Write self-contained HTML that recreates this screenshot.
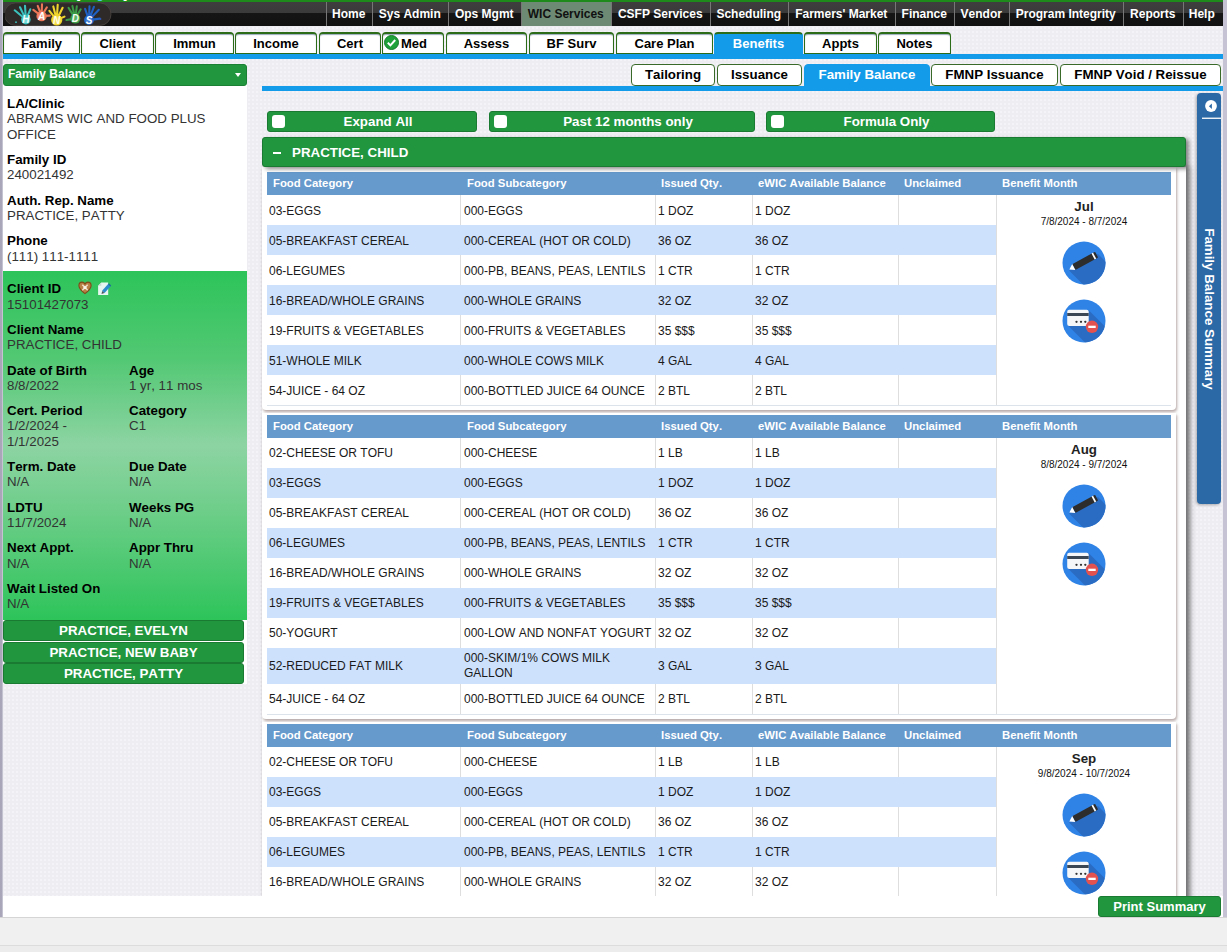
<!DOCTYPE html>
<html lang="en"><head><meta charset="utf-8"><title>HANDS - Family Balance</title>
<style>
*{box-sizing:border-box;margin:0;padding:0}
html,body{width:1227px;height:952px;overflow:hidden}
body{position:relative;font-family:"Liberation Sans",sans-serif;font-size:12px;color:#000;background:#f0f0f0;font-kerning:none}
.abs{position:absolute}
#frame{position:absolute;left:0;top:0;width:1227px;height:918px;background:linear-gradient(90deg,#a7a5b7 0,#a9a7b9 2px,#e0dfe9 3px,#c5c3d4 4px)}
#page{position:absolute;left:3px;top:0;width:1220px;height:917px;background:#fff;overflow:hidden}
#bg{position:absolute;left:0;top:26px;width:1220px;height:870px;background-color:#ededf2;background-image:radial-gradient(#f4f4f8 0.9px,transparent 1.3px);background-size:4px 4px}
#gstrip{position:absolute;left:0;top:0;width:1220px;height:2px;background:#1f8a1c}
#cut{position:absolute;left:73.5px;top:-11px;font-size:11px;font-weight:bold;line-height:13px;color:#fff;white-space:nowrap}
#cut span{color:#4fc3e8}
#topbar{position:absolute;left:0;top:2px;width:1220px;height:24px;background:linear-gradient(#3e3e3e 0,#3a3a3a 11px,#151515 11.5px,#111 100%)}
.nav{position:absolute;top:2px;height:24px;color:#fff;font-weight:bold;font-size:12px;line-height:24px;text-align:center;border-left:1px solid #777;white-space:nowrap;padding-right:1.5px}
.nav.on{background:#6d8b74;color:#111}
.tab{position:absolute;top:32px;height:22px;background:#fff;border:1px solid #2c6b18;border-top-width:2px;border-radius:4px 4px 0 0;font-weight:bold;font-size:13px;line-height:19px;text-align:center;white-space:nowrap;box-shadow:inset 0 1px 1px #9ab}
.tab.on{background:#139be9;border-color:#2c6b18 #139be9 #139be9;color:#fff;box-shadow:none}
.bline{position:absolute;height:5px;background:#139be9}
.stab{position:absolute;top:64px;height:22px;background:#fff;border:1px solid #3a6a2a;border-radius:4px;font-weight:bold;font-size:13.3px;line-height:20px;text-align:center;white-space:nowrap}
.stab.on{background:#139be9;border-color:#139be9;color:#fff;border-radius:4px 4px 0 0;height:24px}
#left{position:absolute;left:0;top:64px;width:244px;height:620px;background:#fff}
#lhead{position:absolute;left:0;top:0;width:244px;height:22px;background:#21963f;border-radius:3px;color:#fff;font-weight:bold;font-size:12px;line-height:19px;padding-left:4px;border:1px solid #1b8034}
#lhead:after{content:"";position:absolute;right:5.500px;top:8px;border:3.500px solid transparent;border-top:4.500px solid #fff}
.grp{position:absolute;left:4px;width:244px;font-size:13.33px;line-height:15.33px;color:#333;white-space:nowrap}
.g{margin-bottom:10px}.g b{color:#000;display:block}.g.h{display:inline-block;width:122px;vertical-align:top}
#client{position:absolute;left:0;top:207px;width:244px;height:349px;background:linear-gradient(#2dc45a 0%,#52c873 25%,#8dd4a3 50%,#6fce8a 68%,#2dc45a 100%)}
.cbtn{position:absolute;left:0;width:241px;height:21px;background:#21963f;border:1px solid #1a7a31;border-radius:3px;color:#fff;font-weight:bold;font-size:13.33px;line-height:19px;text-align:center}
.gbtn{position:absolute;top:111px;height:21px;background:#21963f;border:1px solid #1a7a31;border-radius:3px;color:#fff;font-weight:bold;font-size:13.33px;line-height:19px;text-align:center;padding-left:12px}
.gbtn i{position:absolute;left:4px;top:3px;width:13px;height:13px;background:#fff;border-radius:3px}
#acc{position:absolute;left:259px;top:137px;width:924px;height:30px;background:#21963f;border:1px solid #1a7a31;border-radius:3px;color:#fff;font-weight:bold;font-size:13.33px;line-height:29px;padding-left:29px;box-shadow:3px 2px 4px rgba(0,0,0,.45);z-index:3;white-space:pre}
#acc i{position:absolute;left:10px;top:13.5px;width:8px;height:2px;background:#fff}
#accbody{position:absolute;left:259px;top:167px;width:924px;height:760px;background:#fff;box-shadow:4px 0 5px rgba(70,70,70,.75)}
.card{position:absolute;left:0;width:914px;background:#fff;box-shadow:1px 2px 3px rgba(110,80,80,.5);border-radius:0 0 4px 4px}
.tbl{position:absolute;left:264px;width:904px}
.th{position:absolute;left:0;top:0;width:904px;height:23px;background:#6699cc;color:#fff;font-weight:bold;font-size:11.33px;line-height:22px}
.th span{position:absolute;top:0;padding-left:6px;white-space:nowrap}
.tr{position:absolute;left:0;width:729px;background:#fff;font-size:12px;color:#1a1a1a}
.tr.alt{background:#cde1fd}
.tr span{position:absolute;top:0;height:100%;padding-left:2px;display:flex;align-items:center;white-space:nowrap;line-height:15px;border-left:1px solid #dedede}
.t1 .tr span{padding-top:2px}
.tr.alt span{border-left-color:#cde1fd}
.c1{left:0;width:194px;border-left:none!important;padding-left:2px!important}.c2{left:193px;width:195px;padding-left:3px!important}.c3{left:388px;width:97px}.c4{left:485px;width:146px}.c5{left:631px;width:98px}
.bm{position:absolute;left:729px;top:23px;width:175px;border-left:1px solid #dedede;text-align:center;background:#fff}
.bl{position:absolute;left:0;width:904px;height:1px;background:#dde3ea}
.mo{font-weight:bold;font-size:13.33px;color:#222;margin-top:4px;line-height:15px}
.dt{font-size:10px;line-height:14px;color:#111;margin-top:.5px}
.ic{position:absolute;left:65px}
#side{position:absolute;left:1194px;top:93px;width:24px;height:411px;background:#2b69a6;border-radius:4px;box-shadow:-1px 1px 3px rgba(0,0,0,.3)}
#side .vt{position:absolute;left:12px;top:216px;width:0;height:0}
#side .vt span{position:absolute;display:block;width:200px;left:-100px;top:-8px;height:16px;line-height:16px;text-align:center;color:#fff;font-weight:bold;font-size:13.33px;transform:rotate(90deg);white-space:nowrap}
#print{position:absolute;left:1095px;top:896px;width:123px;height:21px;background:#21963f;border:1px solid #1a7a31;border-radius:3px;color:#fff;font-weight:bold;font-size:13px;line-height:19px;text-align:center;z-index:9}
#foot1{position:absolute;left:0;top:917px;width:1227px;height:1px;background:#d5d5d5}
#foot2{position:absolute;left:0;top:945px;width:1227px;height:1px;background:#dcdcdc}
#foot3{position:absolute;left:0;top:946px;width:1227px;height:6px;background:#ececec}
</style></head><body>
<div id="frame"></div>
<div id="page">
<div id="bg"></div>
<div id="gstrip"></div>
<div id="cut">[ <span>Logout</span> ]</div>
<div id="topbar"></div>

<svg class="abs" style="left:2px;top:2px" width="108" height="25" viewBox="0 0 108 25">
<rect x="-0.7" y="0.9" width="106.7" height="22.6" rx="11.3" fill="#2d2a29" stroke="#4d4643" stroke-width="0.8"/>
<g font-family="Liberation Sans, sans-serif" font-weight="bold" font-style="italic" font-size="10"><circle cx="20.9" cy="17.6" r="4.8" fill="#3cc0bd"/><path d="M18.4 15.5L9.7 8.3M19.5 14.6L15.0 5.3M20.7 14.3L20.0 3.9M22.2 14.6L25.3 7.3" stroke="#3cc0bd" stroke-width="2.100" stroke-linecap="round" fill="none"/><circle cx="20.9" cy="17.9" r="3.2" fill="#a5ece8" opacity=".55"/><text x="20.9" y="21.2" text-anchor="middle" fill="#f2ffff">H</text><circle cx="36.6" cy="14.1" r="5.2" fill="#ec7658"/><path d="M33.7 11.9L28.3 7.8M35.3 10.6L32.7 3.9M36.7 10.4L37.0 2.4M38.5 10.9L41.9 5.3M40.3 13.9L44.9 13.6" stroke="#ec7658" stroke-width="2.100" stroke-linecap="round" fill="none"/><circle cx="36.6" cy="14.4" r="3.6" fill="#f4a38c" opacity=".55"/><text x="36.6" y="17.7" text-anchor="middle" fill="#ffffff">A</text><circle cx="51.7" cy="18.0" r="5.6" fill="#efd42c"/><path d="M49.2 14.8L44.4 8.8M50.7 14.0L48.3 4.4M52.0 13.9L52.7 2.9M53.5 14.3L57.6 5.8M55.5 16.4L59.5 14.6" stroke="#efd42c" stroke-width="2.100" stroke-linecap="round" fill="none"/><circle cx="51.7" cy="18.3" r="4.0" fill="#f6e676" opacity=".55"/><text x="51.7" y="21.6" text-anchor="middle" fill="#fffde8">N</text><circle cx="70.3" cy="16.6" r="5.0" fill="#3a9a45"/><path d="M68.4 13.6L63.5 5.8M69.5 13.2L67.4 3.9M70.7 13.1L71.8 4.4M72.1 13.6L75.7 7.3M66.8 17.1L61.5 18.0" stroke="#3a9a45" stroke-width="2.100" stroke-linecap="round" fill="none"/><circle cx="70.3" cy="16.9" r="3.4" fill="#7cc784" opacity=".55"/><text x="70.3" y="20.2" text-anchor="middle" fill="#f2fff0">D</text><circle cx="84.0" cy="18.0" r="5.0" fill="#1f60c2"/><path d="M82.8 14.7L80.1 6.8M84.1 14.5L84.5 4.4M85.2 14.7L88.9 4.8M86.4 15.5L93.8 7.8M87.5 17.6L94.8 16.6" stroke="#1f60c2" stroke-width="2.100" stroke-linecap="round" fill="none"/><circle cx="84.0" cy="18.3" r="3.4" fill="#5b93e3" opacity=".55"/><text x="84.0" y="21.6" text-anchor="middle" fill="#ffffff">S</text><circle cx="11" cy="20.2" r="0.9" fill="#3cc0bd"/><circle cx="95.5" cy="17" r="0.9" fill="#2f55b5"/></g></svg>
<div class="nav" style="left:323px;width:46px">Home</div>
<div class="nav" style="left:369px;width:76px">Sys Admin</div>
<div class="nav" style="left:445px;width:73px">Ops Mgmt</div>
<div class="nav on" style="left:518px;width:90px">WIC Services</div>
<div class="nav" style="left:608px;width:99px">CSFP Services</div>
<div class="nav" style="left:707px;width:78px">Scheduling</div>
<div class="nav" style="left:785px;width:107px">Farmers' Market</div>
<div class="nav" style="left:892px;width:59px">Finance</div>
<div class="nav" style="left:951px;width:55px">Vendor</div>
<div class="nav" style="left:1006px;width:114px">Program Integrity</div>
<div class="nav" style="left:1120px;width:60px">Reports</div>
<div class="nav" style="left:1180px;width:38px">Help</div>
<div class="tab" style="left:0px;width:77px">Family</div>
<div class="tab" style="left:78px;width:73px">Client</div>
<div class="tab" style="left:152px;width:79px">Immun</div>
<div class="tab" style="left:232px;width:82px">Income</div>
<div class="tab" style="left:316px;width:62px">Cert</div>
<div class="tab" style="left:379px;width:62px"><svg style="position:absolute;left:1px;top:1px" width="15" height="15" viewBox="0 0 15 15"><circle cx="7.5" cy="7.5" r="7" fill="#1fa23a" stroke="#167a2a"/><path d="M3.8 7.8l2.6 2.6 4.8-5.4" fill="none" stroke="#fff" stroke-width="2"/></svg><span style="position:absolute;left:18px;top:0">Med</span></div>
<div class="tab" style="left:443px;width:81px">Assess</div>
<div class="tab" style="left:526px;width:85px">BF Surv</div>
<div class="tab" style="left:613px;width:97px">Care Plan</div>
<div class="tab on" style="left:711px;width:89px">Benefits</div>
<div class="tab" style="left:801px;width:73px">Appts</div>
<div class="tab" style="left:875px;width:73px">Notes</div>
<div class="bline" style="left:0;top:54px;width:1220px"></div>
<div class="bline" style="left:259px;top:86px;width:961px"></div>
<div class="stab" style="left:628px;width:84px">Tailoring</div>
<div class="stab" style="left:714px;width:85px">Issuance</div>
<div class="stab on" style="left:801px;width:126px">Family Balance</div>
<div class="stab" style="left:928px;width:127px">FMNP Issuance</div>
<div class="stab" style="left:1057px;width:161px">FMNP Void / Reissue</div>
<div id="left"><div id="lhead">Family Balance</div>
<div class="grp" style="top:32px">
<div class="g"><b>LA/Clinic</b>ABRAMS WIC AND FOOD PLUS<br>OFFICE</div>
<div class="g"><b>Family ID</b>240021492</div>
<div class="g"><b>Auth. Rep. Name</b>PRACTICE, PATTY</div>
<div class="g"><b>Phone</b>(111) 111-1111</div>
</div>
<div id="client"></div>
<div class="grp" style="top:217.2px">
<div class="g"><b>Client ID</b>15101427073</div>
<div class="g"><b>Client Name</b>PRACTICE, CHILD</div>
<div><div class="g h"><b>Date of Birth</b>8/8/2022</div><div class="g h"><b>Age</b>1 yr, 11 mos</div></div>
<div><div class="g h"><b>Cert. Period</b>1/2/2024 -<br>1/1/2025</div><div class="g h"><b>Category</b>C1<br>&nbsp;</div></div>
<div><div class="g h"><b>Term. Date</b>N/A</div><div class="g h"><b>Due Date</b>N/A</div></div>
<div><div class="g h"><b>LDTU</b>11/7/2024</div><div class="g h"><b>Weeks PG</b>N/A</div></div>
<div><div class="g h"><b>Next Appt.</b>N/A</div><div class="g h"><b>Appr Thru</b>N/A</div></div>
<div class="g"><b>Wait Listed On</b>N/A</div>
</div>
<svg class="abs" style="left:75px;top:217px;overflow:visible" width="36" height="16" viewBox="0 0 36 16">
<path d="M7 12.600C3.200 9.700 0.900 7.400 0.900 4.700 0.900 2.600 2.400 1.100 4.100 1.100c1.300 0 2.300.7 2.900 1.800.6-1.100 1.600-1.800 2.900-1.800 1.700 0 3.200 1.500 3.200 3.600 0 2.700-2.300 5-6.100 7.900z" fill="#b98045" stroke="#7d4c1a" stroke-width="1.100"/>
<path d="M4.300 3.800l5.400 5.400M9.700 3.800l-5.400 5.400" stroke="#f6ead8" stroke-width="1.500" opacity=".9"/><circle cx="7" cy="6.500" r="1.600" fill="#fbf6ea"/>
<path d="M23.300 1.400h6.900v12.600h-10.100v-9.300z" fill="#e6f5ef"/><path d="M23.300 1.400v3.300h-3.200z" fill="#c4d9d2"/>
<path d="M25.300 10.900l6.300-7" stroke="#2a8ccb" stroke-width="3.300"/><path d="M30.400 2.800l2.400 2.200" stroke="#1f7097" stroke-width="1.200"/><path d="M23.500 12.900l.7-3 2.300 2.100z" fill="#4a5560"/></svg>
<div class="cbtn" style="top:556px">PRACTICE, EVELYN</div>
<div class="cbtn" style="top:578px">PRACTICE, NEW BABY</div>
<div class="cbtn" style="top:599px">PRACTICE, PATTY</div>
</div>
<div class="gbtn" style="left:264px;width:210px"><i></i>Expand All</div>
<div class="gbtn" style="left:486px;width:266px"><i></i>Past 12 months only</div>
<div class="gbtn" style="left:763px;width:229px"><i></i>Formula Only</div>
<div id="acc"><i></i>PRACTICE, CHILD</div>
<div id="accbody">
<div class="card" style="top:0;height:243px"></div><div class="card" style="top:246px;height:306px"></div><div class="card" style="top:555px;height:240px"></div>
</div>
<div class="tbl t1" style="top:172px">
<div class="th"><span style="left:0;width:194px">Food Category</span><span style="left:194px;width:194px">Food Subcategory</span><span style="left:388px;width:97px">Issued Qty.</span><span style="left:485px;width:146px">eWIC Available Balance</span><span style="left:631px;width:98px">Unclaimed</span><span style="left:729px;width:175px">Benefit Month</span></div>
<div class="tr" style="top:23px;height:30px"><span class="c1">03-EGGS</span><span class="c2">000-EGGS</span><span class="c3">1 DOZ</span><span class="c4">1 DOZ</span><span class="c5"></span></div>
<div class="tr alt" style="top:53px;height:30px"><span class="c1">05-BREAKFAST CEREAL</span><span class="c2">000-CEREAL (HOT OR COLD)</span><span class="c3">36 OZ</span><span class="c4">36 OZ</span><span class="c5"></span></div>
<div class="tr" style="top:83px;height:30px"><span class="c1">06-LEGUMES</span><span class="c2">000-PB, BEANS, PEAS, LENTILS</span><span class="c3">1 CTR</span><span class="c4">1 CTR</span><span class="c5"></span></div>
<div class="tr alt" style="top:113px;height:30px"><span class="c1">16-BREAD/WHOLE GRAINS</span><span class="c2">000-WHOLE GRAINS</span><span class="c3">32 OZ</span><span class="c4">32 OZ</span><span class="c5"></span></div>
<div class="tr" style="top:143px;height:30px"><span class="c1">19-FRUITS &amp; VEGETABLES</span><span class="c2">000-FRUITS &amp; VEGETABLES</span><span class="c3">35 $$$</span><span class="c4">35 $$$</span><span class="c5"></span></div>
<div class="tr alt" style="top:173px;height:30px"><span class="c1">51-WHOLE MILK</span><span class="c2">000-WHOLE COWS MILK</span><span class="c3">4 GAL</span><span class="c4">4 GAL</span><span class="c5"></span></div>
<div class="tr" style="top:203px;height:30px"><span class="c1">54-JUICE - 64 OZ</span><span class="c2">000-BOTTLED JUICE 64 OUNCE</span><span class="c3">2 BTL</span><span class="c4">2 BTL</span><span class="c5"></span></div>
<div class="bl" style="top:233px"></div>
<div class="bm" style="height:210px"><div class="mo">Jul</div><div class="dt">7/8/2024 - 8/7/2024</div>
<svg class="ic" style="top:46.4px" width="44" height="44" viewBox="0 0 44 44"><defs><clipPath id="ca"><circle cx="22" cy="22" r="21.5"/></clipPath></defs>
<circle cx="22" cy="22" r="21.5" fill="#2f83e6"/><g clip-path="url(#ca)"><path d="M7 29.500 L36 13 L48 25 L48 48 L25.500 48 Z" fill="#2a6cc3"/></g>
<g transform="rotate(-28.500 21 21)"><rect x="10.500" y="17.700" width="26" height="6.600" rx="1" fill="#2d2d2d"/><rect x="32.500" y="17.700" width="1.700" height="6.600" fill="#fff"/><path d="M10.500 17.700 L5.500 21 L10.500 24.300 Z" fill="#fff"/></g></svg>
<svg class="ic" style="top:104.0px" width="44" height="44" viewBox="0 0 44 44"><defs><clipPath id="da"><circle cx="22" cy="22" r="21.500"/></clipPath></defs>
<circle cx="22" cy="22" r="21.500" fill="#2f83e6"/><g clip-path="url(#da)"><path d="M5.500 26 L26.500 11 L48 32.500 L48 48 L27.500 48 Z" fill="#2a6cc3"/></g>
<rect x="5.200" y="10.700" width="21.500" height="16.400" rx="2" fill="#f4f6f8"/><rect x="5.200" y="14" width="21.500" height="3" fill="#3a4654"/>
<circle cx="14.500" cy="22.800" r="1.150" fill="#333"/><circle cx="19" cy="22.800" r="1.150" fill="#333"/><circle cx="23.300" cy="22.800" r="1.150" fill="#333"/>
<circle cx="30" cy="27.800" r="6.200" fill="#e4524f"/><rect x="26.300" y="26.700" width="7.400" height="2.300" fill="#fff"/></svg>
</div></div>
<div class="tbl" style="top:415px">
<div class="th"><span style="left:0;width:194px">Food Category</span><span style="left:194px;width:194px">Food Subcategory</span><span style="left:388px;width:97px">Issued Qty.</span><span style="left:485px;width:146px">eWIC Available Balance</span><span style="left:631px;width:98px">Unclaimed</span><span style="left:729px;width:175px">Benefit Month</span></div>
<div class="tr" style="top:23px;height:30px"><span class="c1">02-CHEESE OR TOFU</span><span class="c2">000-CHEESE</span><span class="c3">1 LB</span><span class="c4">1 LB</span><span class="c5"></span></div>
<div class="tr alt" style="top:53px;height:30px"><span class="c1">03-EGGS</span><span class="c2">000-EGGS</span><span class="c3">1 DOZ</span><span class="c4">1 DOZ</span><span class="c5"></span></div>
<div class="tr" style="top:83px;height:30px"><span class="c1">05-BREAKFAST CEREAL</span><span class="c2">000-CEREAL (HOT OR COLD)</span><span class="c3">36 OZ</span><span class="c4">36 OZ</span><span class="c5"></span></div>
<div class="tr alt" style="top:113px;height:30px"><span class="c1">06-LEGUMES</span><span class="c2">000-PB, BEANS, PEAS, LENTILS</span><span class="c3">1 CTR</span><span class="c4">1 CTR</span><span class="c5"></span></div>
<div class="tr" style="top:143px;height:30px"><span class="c1">16-BREAD/WHOLE GRAINS</span><span class="c2">000-WHOLE GRAINS</span><span class="c3">32 OZ</span><span class="c4">32 OZ</span><span class="c5"></span></div>
<div class="tr alt" style="top:173px;height:30px"><span class="c1">19-FRUITS &amp; VEGETABLES</span><span class="c2">000-FRUITS &amp; VEGETABLES</span><span class="c3">35 $$$</span><span class="c4">35 $$$</span><span class="c5"></span></div>
<div class="tr" style="top:203px;height:30px"><span class="c1">50-YOGURT</span><span class="c2">000-LOW AND NONFAT YOGURT</span><span class="c3">32 OZ</span><span class="c4">32 OZ</span><span class="c5"></span></div>
<div class="tr alt" style="top:233px;height:36px"><span class="c1">52-REDUCED FAT MILK</span><span class="c2">000-SKIM/1% COWS MILK<br>GALLON</span><span class="c3">3 GAL</span><span class="c4">3 GAL</span><span class="c5"></span></div>
<div class="tr" style="top:269px;height:30px"><span class="c1">54-JUICE - 64 OZ</span><span class="c2">000-BOTTLED JUICE 64 OUNCE</span><span class="c3">2 BTL</span><span class="c4">2 BTL</span><span class="c5"></span></div>
<div class="bl" style="top:299px"></div>
<div class="bm" style="height:276px"><div class="mo">Aug</div><div class="dt">8/8/2024 - 9/7/2024</div>
<svg class="ic" style="top:46.4px" width="44" height="44" viewBox="0 0 44 44"><defs><clipPath id="cb"><circle cx="22" cy="22" r="21.5"/></clipPath></defs>
<circle cx="22" cy="22" r="21.5" fill="#2f83e6"/><g clip-path="url(#cb)"><path d="M7 29.500 L36 13 L48 25 L48 48 L25.500 48 Z" fill="#2a6cc3"/></g>
<g transform="rotate(-28.500 21 21)"><rect x="10.500" y="17.700" width="26" height="6.600" rx="1" fill="#2d2d2d"/><rect x="32.500" y="17.700" width="1.700" height="6.600" fill="#fff"/><path d="M10.500 17.700 L5.500 21 L10.500 24.300 Z" fill="#fff"/></g></svg>
<svg class="ic" style="top:104.0px" width="44" height="44" viewBox="0 0 44 44"><defs><clipPath id="db"><circle cx="22" cy="22" r="21.500"/></clipPath></defs>
<circle cx="22" cy="22" r="21.500" fill="#2f83e6"/><g clip-path="url(#db)"><path d="M5.500 26 L26.500 11 L48 32.500 L48 48 L27.500 48 Z" fill="#2a6cc3"/></g>
<rect x="5.200" y="10.700" width="21.500" height="16.400" rx="2" fill="#f4f6f8"/><rect x="5.200" y="14" width="21.500" height="3" fill="#3a4654"/>
<circle cx="14.500" cy="22.800" r="1.150" fill="#333"/><circle cx="19" cy="22.800" r="1.150" fill="#333"/><circle cx="23.300" cy="22.800" r="1.150" fill="#333"/>
<circle cx="30" cy="27.800" r="6.200" fill="#e4524f"/><rect x="26.300" y="26.700" width="7.400" height="2.300" fill="#fff"/></svg>
</div></div>
<div class="tbl" style="top:724px">
<div class="th"><span style="left:0;width:194px">Food Category</span><span style="left:194px;width:194px">Food Subcategory</span><span style="left:388px;width:97px">Issued Qty.</span><span style="left:485px;width:146px">eWIC Available Balance</span><span style="left:631px;width:98px">Unclaimed</span><span style="left:729px;width:175px">Benefit Month</span></div>
<div class="tr" style="top:23px;height:30px"><span class="c1">02-CHEESE OR TOFU</span><span class="c2">000-CHEESE</span><span class="c3">1 LB</span><span class="c4">1 LB</span><span class="c5"></span></div>
<div class="tr alt" style="top:53px;height:30px"><span class="c1">03-EGGS</span><span class="c2">000-EGGS</span><span class="c3">1 DOZ</span><span class="c4">1 DOZ</span><span class="c5"></span></div>
<div class="tr" style="top:83px;height:30px"><span class="c1">05-BREAKFAST CEREAL</span><span class="c2">000-CEREAL (HOT OR COLD)</span><span class="c3">36 OZ</span><span class="c4">36 OZ</span><span class="c5"></span></div>
<div class="tr alt" style="top:113px;height:30px"><span class="c1">06-LEGUMES</span><span class="c2">000-PB, BEANS, PEAS, LENTILS</span><span class="c3">1 CTR</span><span class="c4">1 CTR</span><span class="c5"></span></div>
<div class="tr" style="top:143px;height:30px"><span class="c1">16-BREAD/WHOLE GRAINS</span><span class="c2">000-WHOLE GRAINS</span><span class="c3">32 OZ</span><span class="c4">32 OZ</span><span class="c5"></span></div>
<div class="tr alt" style="top:173px;height:30px"><span class="c1">19-FRUITS &amp; VEGETABLES</span><span class="c2">000-FRUITS &amp; VEGETABLES</span><span class="c3">35 $$$</span><span class="c4">35 $$$</span><span class="c5"></span></div>
<div class="tr" style="top:203px;height:30px"><span class="c1">50-YOGURT</span><span class="c2">000-LOW AND NONFAT YOGURT</span><span class="c3">32 OZ</span><span class="c4">32 OZ</span><span class="c5"></span></div>
<div class="tr alt" style="top:233px;height:36px"><span class="c1">52-REDUCED FAT MILK</span><span class="c2">000-SKIM/1% COWS MILK<br>GALLON</span><span class="c3">3 GAL</span><span class="c4">3 GAL</span><span class="c5"></span></div>
<div class="tr" style="top:269px;height:30px"><span class="c1">54-JUICE - 64 OZ</span><span class="c2">000-BOTTLED JUICE 64 OUNCE</span><span class="c3">2 BTL</span><span class="c4">2 BTL</span><span class="c5"></span></div>
<div class="bl" style="top:299px"></div>
<div class="bm" style="height:276px"><div class="mo">Sep</div><div class="dt">9/8/2024 - 10/7/2024</div>
<svg class="ic" style="top:46.4px" width="44" height="44" viewBox="0 0 44 44"><defs><clipPath id="cc"><circle cx="22" cy="22" r="21.5"/></clipPath></defs>
<circle cx="22" cy="22" r="21.5" fill="#2f83e6"/><g clip-path="url(#cc)"><path d="M7 29.500 L36 13 L48 25 L48 48 L25.500 48 Z" fill="#2a6cc3"/></g>
<g transform="rotate(-28.500 21 21)"><rect x="10.500" y="17.700" width="26" height="6.600" rx="1" fill="#2d2d2d"/><rect x="32.500" y="17.700" width="1.700" height="6.600" fill="#fff"/><path d="M10.500 17.700 L5.500 21 L10.500 24.300 Z" fill="#fff"/></g></svg>
<svg class="ic" style="top:104.0px" width="44" height="44" viewBox="0 0 44 44"><defs><clipPath id="dc"><circle cx="22" cy="22" r="21.500"/></clipPath></defs>
<circle cx="22" cy="22" r="21.500" fill="#2f83e6"/><g clip-path="url(#dc)"><path d="M5.500 26 L26.500 11 L48 32.500 L48 48 L27.500 48 Z" fill="#2a6cc3"/></g>
<rect x="5.200" y="10.700" width="21.500" height="16.400" rx="2" fill="#f4f6f8"/><rect x="5.200" y="14" width="21.500" height="3" fill="#3a4654"/>
<circle cx="14.500" cy="22.800" r="1.150" fill="#333"/><circle cx="19" cy="22.800" r="1.150" fill="#333"/><circle cx="23.300" cy="22.800" r="1.150" fill="#333"/>
<circle cx="30" cy="27.800" r="6.200" fill="#e4524f"/><rect x="26.300" y="26.700" width="7.400" height="2.300" fill="#fff"/></svg>
</div></div>
<div id="side"><svg class="abs" style="left:0;top:0" width="24" height="28" viewBox="0 0 24 28"><circle cx="14" cy="13" r="5.900" fill="#fff"/><path d="M14.900 10.500v5.400l-3-2.700z" fill="#2b69a6"/><rect x="5" y="24.600" width="19" height="1.300" fill="#fff"/></svg><div class="vt"><span>Family Balance Summary</span></div></div>
<div class="abs" style="left:0;top:896px;width:1220px;height:21px;background:#fff;z-index:8"></div>
<div id="print">Print Summary</div>
</div>
<div id="foot1"></div><div id="foot2"></div><div id="foot3"></div>
</body></html>
